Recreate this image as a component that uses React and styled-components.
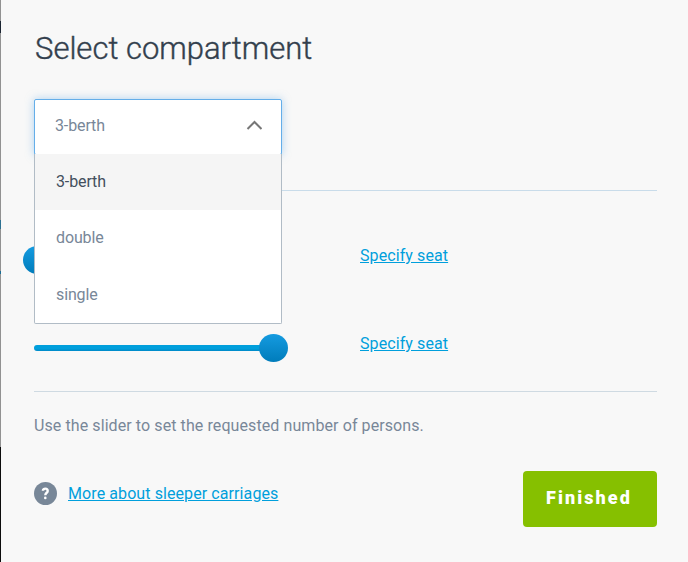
import React, { useState } from 'react';
import styled, { createGlobalStyle, css } from 'styled-components';

const GlobalStyle = createGlobalStyle`
  * {
    box-sizing: border-box;
  }

  body {
    margin: 0;
    background: #f8f8f8;
    font-family: Roboto, sans-serif;
    font-size: 16px;
    letter-spacing: 0.09px;
    color: #788798;
  }
`;

const Page = styled.div`
  display: flex;
  height: 562px;
  overflow: hidden;
`;

const Backdrop = styled.div`
  flex: 0 0 1px;
  background: linear-gradient(
    #929292 0 21px,
    #1b2532 21px 33px,
    #929292 33px 220px,
    #2d7192 220px 229px,
    #929292 229px 271px,
    #1a6d94 271px 274px,
    #929292 274px 447px,
    #0c0c0c 447px
  );
`;

const Dialog = styled.main`
  flex: 1;
  display: flex;
  flex-direction: column;
  padding: 28px 31px 0 33px;
`;

const Title = styled.h1`
  margin: 0 0 30px;
  padding: 1px 0 0 1px;
  font-size: 31px;
  line-height: 40px;
  font-weight: 300;
  letter-spacing: 0;
  color: #333f4d;
  -webkit-text-stroke: 0.4px #333f4d;
`;

const CompartmentSection = styled.section`
  height: 92px;
  border-bottom: 1px solid #c9dcea;
`;

const Select = styled.div`
  position: relative;
  width: 248px;
  letter-spacing: -0.12px;
`;

const SelectField = styled.button`
  display: flex;
  align-items: center;
  justify-content: space-between;
  width: 100%;
  height: 56px;
  padding: 0 19px 3px 20px;
  border: 1px solid #64aee9;
  border-radius: 2px;
  background: #fff;
  box-shadow: 0 0 8px rgba(100, 174, 233, 0.5);
  font: inherit;
  letter-spacing: inherit;
  color: inherit;

  svg {
    margin-bottom: 1px;
  }
`;

const Options = styled.ul`
  position: absolute;
  top: 55px;
  left: 0;
  z-index: 1;
  width: 100%;
  height: 170px;
  margin: 0;
  padding: 0;
  list-style: none;
  border: 1px solid #b1bcc6;
  border-top: 0;
  border-radius: 0 0 2px 2px;
  background: #fff;
`;

const Option = styled.li`
  height: 56.4px;
  padding-left: 21px;
  line-height: 55px;
  ${props =>
    props.$selected &&
    css`
      background: #f5f5f5;
      color: #434f5d;
    `}
`;

const Passengers = styled.section`
  height: 201px;
  padding-top: 25px;
  border-bottom: 1px solid #cfdae2;
`;

const PassengerRow = styled.div`
  display: grid;
  grid-template-columns: 240px auto;
  column-gap: 86px;
  align-items: center;
  justify-content: start;
  height: 88px;
`;

const Track = styled.div`
  display: flex;
  align-items: center;
  height: 6px;
  border-radius: 3px;
  background: linear-gradient(#009fdc 60%, #0089c7);
`;

const Handle = styled.span`
  flex: none;
  width: 29px;
  height: 28px;
  border-radius: 50%;
  background: linear-gradient(#159be0, #007cbb);
`;

const Link = styled.a`
  color: #009fdc;
  text-decoration: underline;
`;

const SeatLink = styled(Link)`
  margin-top: -9px;
`;

const Hint = styled.p`
  margin: 23px 0 35px;
  line-height: 21px;
`;

const Footer = styled.footer`
  display: flex;
  justify-content: space-between;
`;

const Help = styled.div`
  display: flex;
  align-items: center;
  gap: 11px;
  height: 45px;
`;

const SubmitButton = styled.button`
  width: 134px;
  height: 56px;
  padding: 0 2px 3px 0;
  border: 0;
  border-radius: 4px;
  background: #86c000;
  color: #fff;
  font: 900 18px Roboto, sans-serif;
  letter-spacing: 2.1px;
`;

const ChevronUp = () => (
  <svg width="16" height="10" viewBox="0 0 16 10" fill="none" stroke="#777" strokeWidth="2">
    <path d="M1.5 9L8.5 2L15.5 9" />
  </svg>
);

const HelpIcon = () => (
  <svg width="23" height="23" viewBox="0 0 23 23">
    <circle cx="11.5" cy="11.5" r="11.5" fill="#788798" />
    <path
      d="M8.9 8.8C8.9 5.9 13.7 6 13.7 8.9C13.7 10.8 11.3 10.8 11.3 13.3"
      fill="none"
      stroke="#fff"
      strokeWidth="2.4"
    />
    <circle cx="11.3" cy="15.9" r="1.3" fill="#fff" />
  </svg>
);

const Slider = ({ value, max }) => (
  <Track>
    <Handle style={{ marginLeft: (value / max) * 240 - 15 + (value ? 0 : 4) }} />
  </Track>
);

const compartments = ['3-berth', 'double', 'single'];
const passengers = [
  { id: 'first', value: 0 },
  { id: 'second', value: 1 }
];

export default function App() {
  const [selected, setSelected] = useState('3-berth');
  const [open, setOpen] = useState(true);

  return (
    <>
      <GlobalStyle />
      <Page>
        <Backdrop />
        <Dialog>
          <Title>Select compartment</Title>
          <CompartmentSection>
            <Select>
              <SelectField type="button" onClick={() => setOpen(!open)}>
                {selected}
                <ChevronUp />
              </SelectField>
              {open && (
                <Options>
                  {compartments.map(name => (
                    <Option key={name} $selected={name === selected} onClick={() => setSelected(name)}>
                      {name}
                    </Option>
                  ))}
                </Options>
              )}
            </Select>
          </CompartmentSection>
          <Passengers>
            {passengers.map(passenger => (
              <PassengerRow key={passenger.id}>
                <Slider value={passenger.value} max={1} />
                <SeatLink href="#">Specify seat</SeatLink>
              </PassengerRow>
            ))}
          </Passengers>
          <Hint>Use the slider to set the requested number of persons.</Hint>
          <Footer>
            <Help>
              <HelpIcon />
              <Link href="#">More about sleeper carriages</Link>
            </Help>
            <SubmitButton type="button">Finished</SubmitButton>
          </Footer>
        </Dialog>
      </Page>
    </>
  );
}
